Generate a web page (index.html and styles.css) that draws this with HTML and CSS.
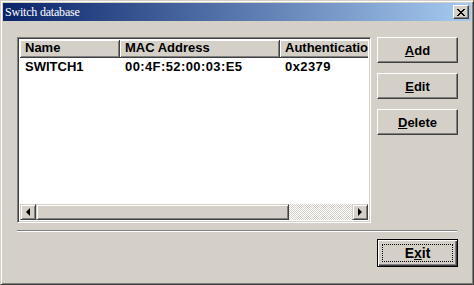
FILE: index.html
```html
<!DOCTYPE html>
<html>

<head>
    <meta charset="utf-8">
    <title>Switch database</title>
    <link rel="stylesheet" href="styles.css">
</head>

<body>
    <div class="window">
        <div class="titlebar">
            <span class="title">Switch database</span>
            <div class="close">
                <svg width="8" height="7" viewBox="0 0 8 7">
                    <path d="M0 0h2v1h1v1h2v-1h1v-1h2v1h-1v1h-1v1h-1v1h1v1h1v1h1v1h-2v-1h-1v-1h-2v1h-1v1h-2v-1h1v-1h1v-1h1v-1h-1v-1h-1v-1h-1z" fill="#000"/>
                </svg>
            </div>
        </div>

        <div class="content">
            <div class="main">
                <div class="listview">
                    <div class="lv-body">
                        <div class="lv-header">
                            <div class="col col-name">Name</div>
                            <div class="col col-mac">MAC Address</div>
                            <div class="col col-auth">Authenticatio</div>
                        </div>
                        <div class="lv-row">
                            <div class="cell col-name">SWITCH1</div>
                            <div class="cell col-mac wide">00:4F:52:00:03:E5</div>
                            <div class="cell col-auth wide">0x2379</div>
                        </div>
                    </div>
                    <div class="hscroll">
                        <div class="sb-btn"><span class="arrow-left"></span></div>
                        <div class="sb-thumb"></div>
                        <div class="sb-track"></div>
                        <div class="sb-btn"><span class="arrow-right"></span></div>
                    </div>
                </div>

                <div class="actions">
                    <button class="btn"><u>A</u>dd</button>
                    <button class="btn"><u>E</u>dit</button>
                    <button class="btn"><u>D</u>elete</button>
                </div>
            </div>

            <div class="separator"></div>

            <div class="footer">
                <button class="btn btn-default"><span class="focus">E<u>x</u>it</span></button>
            </div>
        </div>
    </div>
</body>

</html>
```

FILE: styles.css
```css
body {
margin: 0;
background-color: #d4d0c8;
font-family: "Liberation Sans", Arial, sans-serif;
}

.window {
width: 474px;
height: 285px;
box-sizing: border-box;
background: #d4d0c8;
border: 1px solid;
border-color: #d4d0c8 #404040 #404040 #d4d0c8;
box-shadow: inset 1px 1px #fff, inset -1px -1px #808080;
padding: 2px;
display: flex;
flex-direction: column;
}

.titlebar {
height: 18px;
display: flex;
align-items: center;
justify-content: space-between;
padding: 0 2px 0 2px;
background: linear-gradient(to right, #0a246a, #a6caf0);
}

.title {
color: #fff;
font-family: "Liberation Serif", "Times New Roman", serif;
font-size: 12px;
letter-spacing: -0.2px;
}

.close {
width: 16px;
height: 14px;
box-sizing: border-box;
background: #d4d0c8;
border: 1px solid;
border-color: #fff #404040 #404040 #fff;
box-shadow: inset -1px -1px #808080;
display: flex;
align-items: center;
justify-content: center;
}

.content {
padding: 16px 0 0 14px;
}

.main {
display: flex;
gap: 6px;
height: 186px;
}

.listview {
width: 354px;
box-sizing: border-box;
border: 1px solid;
border-color: #808080 #fff #fff #808080;
box-shadow: inset 1px 1px #404040, inset -1px -1px #d4d0c8;
padding: 2px 2px 2px 2px;
background: #fff;
display: flex;
flex-direction: column;
}

.lv-body {
flex: 1;
overflow: hidden;
font-size: 13px;
font-weight: bold;
}

.lv-header {
display: flex;
height: 18px;
white-space: nowrap;
}

.col {
box-sizing: border-box;
height: 18px;
line-height: 16px;
padding-left: 5px;
background: #d4d0c8;
border-right: 1px solid #404040;
border-bottom: 1px solid #404040;
box-shadow: inset 1px 1px #fff, inset -1px -1px #808080;
overflow: hidden;
}

.col-name {
width: 100px;
flex-shrink: 0;
}

.col-mac {
width: 160px;
flex-shrink: 0;
}

.col-auth {
width: 120px;
flex-shrink: 0;
}

.lv-row {
display: flex;
height: 18px;
line-height: 18px;
white-space: nowrap;
}

.cell {
padding-left: 5px;
box-sizing: border-box;
}

.wide {
letter-spacing: 0.4px;
}

.hscroll {
display: flex;
height: 16px;
}

.sb-btn {
width: 16px;
height: 16px;
box-sizing: border-box;
background: #d4d0c8;
border: 1px solid;
border-color: #d4d0c8 #404040 #404040 #d4d0c8;
box-shadow: inset 1px 1px #fff, inset -1px -1px #808080;
display: flex;
align-items: center;
justify-content: center;
}

.arrow-left {
width: 0;
height: 0;
border-top: 4px solid transparent;
border-bottom: 4px solid transparent;
border-right: 4px solid #000;
}

.arrow-right {
width: 0;
height: 0;
border-top: 4px solid transparent;
border-bottom: 4px solid transparent;
border-left: 4px solid #000;
}

.sb-thumb {
width: 253px;
height: 16px;
box-sizing: border-box;
background: #d4d0c8;
border: 1px solid;
border-color: #d4d0c8 #404040 #404040 #d4d0c8;
box-shadow: inset 1px 1px #fff, inset -1px -1px #808080;
}

.sb-track {
flex: 1;
background-color: #fff;
background-image: repeating-conic-gradient(#d4d0c8 0 25%, #fff 0 50%);
background-size: 2px 2px;
}

.actions {
display: flex;
flex-direction: column;
gap: 10px;
}

.btn {
width: 81px;
height: 26px;
box-sizing: border-box;
background: #d4d0c8;
border: 1px solid;
border-color: #fff #404040 #404040 #fff;
box-shadow: inset -1px -1px #808080;
font-family: "Liberation Sans", Arial, sans-serif;
font-size: 13px;
font-weight: bold;
color: #000;
padding: 0;
}

.separator {
width: 440px;
height: 0;
margin-top: 7px;
border-top: 1px solid #808080;
border-bottom: 1px solid #fff;
}

.footer {
display: flex;
justify-content: flex-end;
width: 441px;
margin-top: 7px;
}

.btn-default {
height: 28px;
border: 1px solid #000;
box-shadow: inset 1px 1px #fff, inset -1px -1px #404040, inset -2px -2px #808080;
padding: 4px;
font-size: 14px;
}

.focus {
display: flex;
height: 100%;
box-sizing: border-box;
align-items: center;
justify-content: center;
border: 1px dotted #000;
}
```
